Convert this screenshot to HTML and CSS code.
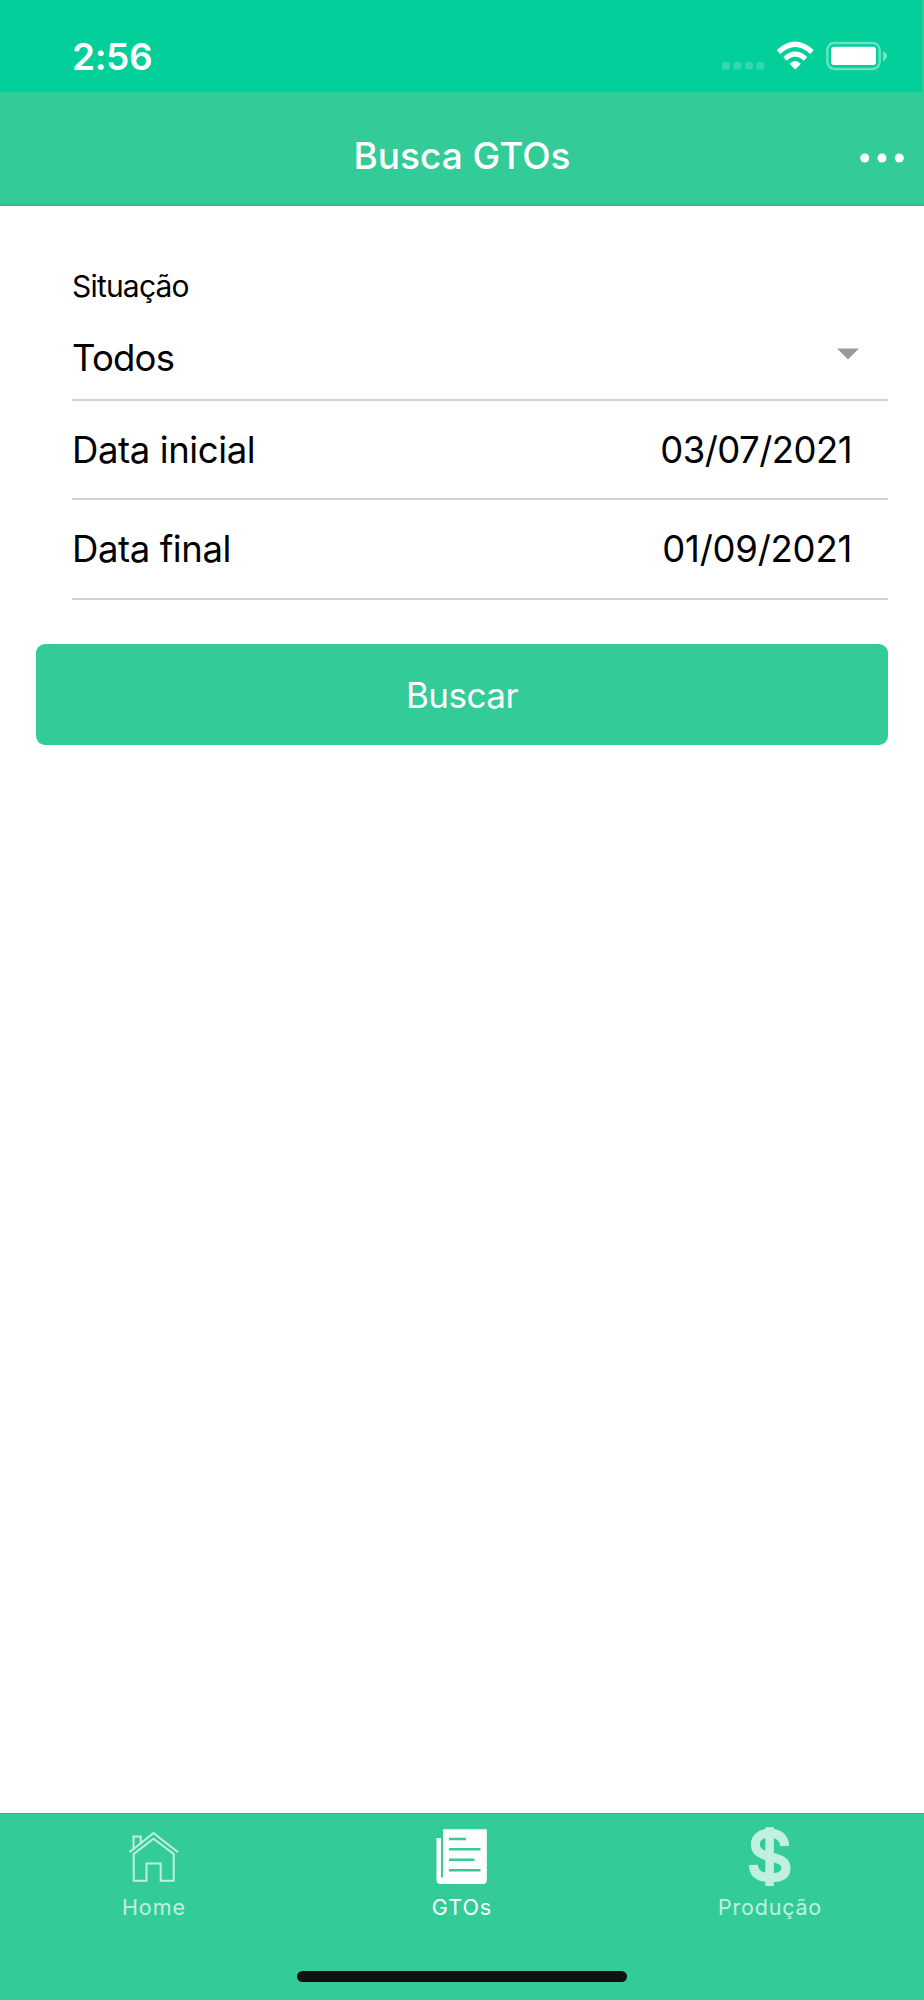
FILE: index.html
```html
<!DOCTYPE html>
<html lang="pt-BR">
<head>
<meta charset="utf-8">
<title>Busca GTOs</title>
<link rel="stylesheet" href="styles.css">
</head>
<body>
<div class="screen">
  <div class="status-bar">
    <span class="clock">2:56</span>
    <svg class="status-icons" width="168" height="32" viewBox="720 40 168 32">
      <g fill="#fff" fill-opacity=".2">
        <rect x="722" y="62" width="8" height="7.5" rx="2"/>
        <rect x="733.300" y="62" width="8" height="7.5" rx="2"/>
        <rect x="745" y="62" width="8" height="7.500" rx="2"/>
        <rect x="756.300" y="62" width="8" height="7.500" rx="2"/>
      </g>
      <g fill="none" stroke="#fff">
        <path d="M778.500 52 Q795.200 36.500 812 52" stroke-width="5.200"/>
        <path d="M785 58.800 Q795.200 49.500 805.500 58.800" stroke-width="5"/>
      </g>
      <path d="M789.500 63.700 Q795.200 58.400 801 63.700 L795.200 69.600Z" fill="#fff"/>
      <rect x="827.300" y="43" width="52.400" height="26" rx="7" fill="none" stroke="#fff" stroke-opacity=".4" stroke-width="2.400"/>
      <rect x="831" y="46.800" width="45" height="18.200" rx="3" fill="#fff"/>
      <path d="M883 51 Q887 53.500 887 56 Q887 58.700 883 61.500Z" fill="#fff" fill-opacity=".45"/>
    </svg>
  </div>
  <header class="nav-bar">
    <h1 class="nav-title">Busca GTOs</h1>
    <svg class="more" width="44" height="10" viewBox="0 0 44 10" fill="#fff"><circle cx="4.700" cy="5" r="4.500"/><circle cx="22" cy="5" r="4.500"/><circle cx="39.300" cy="5" r="4.500"/></svg>
  </header>
  <main class="content">
    <div class="form">
      <div class="label"><span class="t-label">Situação</span></div>
      <div class="row row-select"><span class="t-todos">Todos</span>
        <svg class="caret" width="22" height="12" viewBox="0 0 22 12"><path d="M0 .5H22L11 11.500Z" fill="#999"/></svg>
      </div>
      <div class="row"><span>Data inicial</span><span class="d-start">03/07/2021</span></div>
      <div class="row row-last"><span>Data final</span><span class="d-end">01/09/2021</span></div>
    </div>
    <button class="search">Buscar</button>
  </main>
  <nav class="tab-bar">
    <div class="tab">
      <svg class="tab-icon" width="60" height="64" viewBox="124 1826 60 64" fill="none" stroke="#c2f0e0" stroke-width="2">
        <path d="M129.500 1852.300 L153.500 1833 L178 1852.300"/>
        <path d="M133.700 1854 V1880.700 H146.500 V1863.500 H160.700 V1880.700 H173.700 V1854 L153.500 1838.800Z"/>
        <path d="M133.500 1848.500 V1836.500 H140.700 V1842.500"/>
      </svg>
      <span>Home</span>
    </div>
    <div class="tab tab-active">
      <svg class="tab-icon" width="60" height="64" viewBox="432 1826 60 64">
        <path d="M436.500 1838 H441 V1877.500 H443 V1829.300 H486.800 V1880 Q486.800 1884 483 1884 H440.500 Q436.500 1884 436.500 1880Z" fill="#fff"/>
        <path d="M449 1839 H466 M449 1849.200 H480.500 M449 1859.800 H474.500 M449 1870.300 H480.500" stroke="#33cc99" stroke-width="2.500"/>
      </svg>
      <span>GTOs</span>
    </div>
    <div class="tab">
      <svg class="tab-icon" width="60" height="64" viewBox="740 1826 60 64" fill="none" stroke="#c2f0e0">
        <path d="M769.600 1827.200 V1886" stroke-width="8.500"/>
        <path d="M784.700 1846 C784.200 1837.500 779 1833.200 770 1833.200 C761 1833.200 755.300 1837.700 755.300 1844.500 C755.300 1852 761.500 1854.700 770.500 1856.800 C780 1859 786 1861 786 1868.200 C786 1875.500 779.500 1877.700 770.500 1877.700 C760 1877.700 753.600 1874 753.300 1864.900" stroke-width="9"/>
      </svg>
      <span class="t-prod">Produção</span>
    </div>
  </nav>
  <div class="home-area"><div class="home-indicator"></div></div>
</div>
</body>
</html>
```
FILE: styles.css
```css
* { box-sizing: border-box; }
body { margin: 0; background: #fff; font-family: Inter, "Liberation Sans", sans-serif; }
.screen { width: 924px; height: 2000px; display: flex; flex-direction: column; background: #fff; }
.status-bar { height: 92px; background: #02cf9a; border-right: 2px solid #2dcc99; display: flex; justify-content: space-between; padding: 40px 34px 0 72px; }
.clock { color: #fff; font-size: 37px; font-weight: 600; line-height: 33px; letter-spacing: -0.4px; }
.nav-bar { height: 114px; background: #33cc99; border-bottom: 2px solid #3cb88f; display: grid; grid-template-columns: 1fr auto 1fr; align-items: center; padding: 16px 20px 0; }
.nav-title { grid-column: 2; margin: 0; color: #fff; font-size: 37px; font-weight: 500; line-height: 44px; }
.more { justify-self: end; margin-top: 3px; }
.content { flex: 1; padding: 57px 36px 0 36px; }
.form { padding-left: 36px; color: #000; font-size: 36.500px; letter-spacing: -0.4px; }
.label { height: 46px; font-size: 30px; line-height: 46px; letter-spacing: -0.8px; }
.row { height: 99px; border-bottom: 2px solid #d1d1d6; padding: 1px 36px 0 0; display: flex; justify-content: space-between; align-items: center; }
.row-select { height: 92px; padding: 7px 29px 0 0; }
.row-last { height: 100px; padding-top: 0; }
.t-todos { letter-spacing: -0.8px; }
.d-start { letter-spacing: -0.55px; }
.d-end { letter-spacing: -0.25px; }
.caret { margin-top: -7px; }
.search { display: block; width: 100%; height: 101px; margin-top: 44px; border: 0; border-radius: 9px; background: #33cc99; color: #fff; font: 400 35px/102px Inter, sans-serif; letter-spacing: -0.5px; padding: 0; }
.tab-bar { height: 129px; background: #33cc99; border-top: 1px solid #2eb88a; display: grid; grid-template-columns: repeat(3, 1fr); }
.tab { display: flex; flex-direction: column; align-items: center; padding-top: 12px; color: #c2f0e0; font-size: 21.500px; line-height: 34px; letter-spacing: 1px; }
.tab-active { color: #fff; }
.t-prod { letter-spacing: 0.8px; }
.home-area { height: 58px; background: #33cc99; padding: 29px 297px 0; }
.home-indicator { height: 11px; border-radius: 6px; background: #111; }
```
